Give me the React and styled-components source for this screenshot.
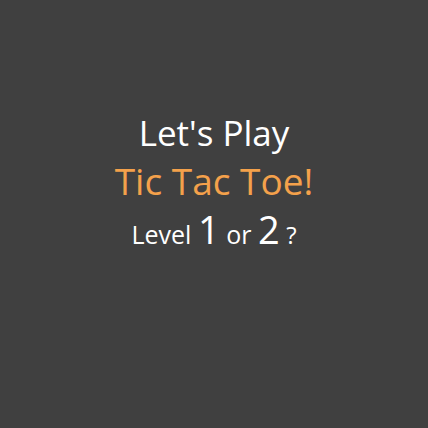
import React from "react";
import styled, { createGlobalStyle } from "styled-components";

const Global = createGlobalStyle`
  html, body { margin: 0; padding: 0; background: #404040; }
  body { font-family: "Open Sans", sans-serif; }
`;

const Screen = styled.div`
  width: 428px;
  height: 428px;
  box-sizing: border-box;
  padding-top: 108px;
  background: #404040;
  display: flex;
  flex-direction: column;
  align-items: center;
  color: #ffffff;
  font-family: "Open Sans", sans-serif;
`;

const Line = styled.div`
  font-size: ${(p) => p.$size}px;
  line-height: ${(p) => p.$lh}px;
  color: ${(p) => p.$color || "#ffffff"};
  white-space: nowrap;
`;

const Num = styled.span`
  font-size: 38px;
`;

const Small = styled.span`
  font-size: 24px;
`;

export default function App() {
  return (
    <>
      <Global />
      <Screen>
        <Line $size={35} $lh={49}>Let's Play</Line>
        <Line $size={37} $lh={48} $color="#f4a14b">Tic Tac Toe!</Line>
        <Line $size={25} $lh={48}>
          Level <Num>1</Num> or <Num>2</Num> <Small>?</Small>
        </Line>
      </Screen>
    </>
  );
}
